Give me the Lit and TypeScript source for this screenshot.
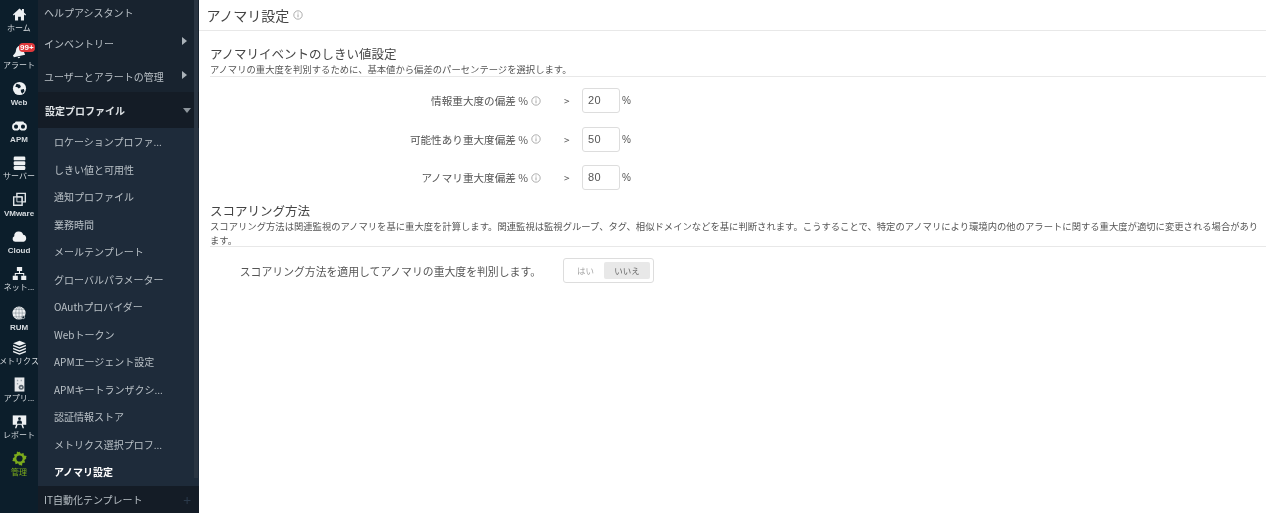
import { LitElement, html, css, svg } from "lit";
import { customElement } from "lit/decorators.js";

const icons: Record<string, unknown> = {
  home: svg`<path d="M8 1.600 1 8l.9 1L3.200 7.900v6.600h3.300v-4.100h3v4.100h3.300V7.900L14.100 9l.9-1-2.300-2.100V2.200h-2.100v1.800z" fill="#eef1f3"/>`,
  bell: svg`<path d="M9 1.500C6 2 4.500 4 4.300 6.500 4.100 9 3 10.800 1 12.300l1 1.700 12-2.500-1-2.500C12.500 7 12.800 2.500 9 1.500zM6 14.200c.4 1.300 2.400 1.300 2.800-.6z" fill="#eef1f3"/>`,
  web: svg`<circle cx="8" cy="8" r="7" fill="#eef1f3"/><path d="M4.800 2.800 8.500 4 9.500 6.300 7.200 8 5.800 6.600l-2.300-.4zM9.300 9.200l3.400-.6.600 2.200-2.300 2.700-1.400-1.700z" fill="#0c1e2b"/>`,
  apm: svg`<path d="M4 3.600h8l3 4.400-4 .5H5L1 8z" fill="#eef1f3"/><circle cx="4.300" cy="9.200" r="3.200" fill="#0c1e2b" stroke="#eef1f3" stroke-width="2"/><circle cx="11.700" cy="9.200" r="3.200" fill="#0c1e2b" stroke="#eef1f3" stroke-width="2"/><rect x="7" y="7" width="2" height="2.500" fill="#eef1f3"/>`,
  server: svg`<rect x="1.800" y="1.500" width="12.400" height="4.200" rx="1.300" fill="#eef1f3"/><rect x="1.800" y="6.600" width="12.400" height="4.200" rx="1.300" fill="#eef1f3"/><rect x="1.800" y="11.700" width="12.400" height="4.200" rx="1.300" fill="#eef1f3"/>`,
  vm: svg`<path d="M5.200 1.500h9v9h-9z" fill="none" stroke="#dfe4e7" stroke-width="1.500"/><path d="M1.800 5.200h9v9h-9z" fill="#0c1e2b" stroke="#dfe4e7" stroke-width="1.500"/><path d="M5.200 5.200h5.600v5.300H5.200z" fill="none" stroke="#dfe4e7" stroke-width="1"/>`,
  cloud: svg`<path d="M3.600 13.600A3.100 3.100 0 0 1 2.400 7.700 4.400 4.400 0 0 1 7 2.700a4.800 4.800 0 0 1 4.900 3.500 3.800 3.800 0 0 1 .5 7.400z" fill="#f1f3f5"/>`,
  net: svg`<path d="M5.200 1h5.600v4.300H5.200zM.8 10.500h5.400v4.500H.8zM9.800 10.500h5.400v4.500H9.800z" fill="#eef1f3"/><path d="M8 5v3.200M3.500 10.500V8h9v2.500" fill="none" stroke="#eef1f3" stroke-width="1.100"/>`,
  rum: svg`<circle cx="7.500" cy="7.500" r="7" fill="#eef1f3"/><path d="M.5 7.500h14M7.500.5v14M2 3.500h11M2 11.500h11" stroke="#67737c" stroke-width=".5"/><ellipse cx="7.500" cy="7.500" rx="3.500" ry="7" fill="none" stroke="#67737c" stroke-width=".5"/><path d="M10.500 10.500h5v4.700h-5z" fill="#0c1e2b"/><circle cx="12" cy="12" r="1.500" fill="none" stroke="#c5ccd1" stroke-width=".9"/>`,
  metrics: svg`<path d="M8 .8 14.800 3.500 8 6.200 1.200 3.500z" fill="#eef1f3"/><path d="M1.200 5.100 8 7.800l6.800-2.700v1.600L8 9.400 1.200 6.700zM1.200 8.300 8 11l6.800-2.700v1.600L8 12.600 1.200 9.900zM1.200 11.500 8 14.200l6.800-2.700v1.600L8 15.800 1.200 13.100z" fill="#eef1f3"/>`,
  app: svg`<path d="M2.800.5h10.400v15H2.800z" fill="#e6e9eb"/><circle cx="9.800" cy="11" r="2.700" fill="#59656e"/><circle cx="9.800" cy="11" r="1" fill="#e6e9eb"/><path d="M5.200 3h1.400v1.400H5.200zM9.200 3h1.400v1.400H9.200zM5.200 6.500h1.400v1.400H5.200z" fill="#9aa3aa"/>`,
  report: svg`<path d="M.8 1.500h14.400v10H.8z" fill="#eef1f3"/><path d="M4.500 11 3.200 15.200h1.500l1.400-4zM11.500 11l1.300 4.200h-1.500l-1.400-4z" fill="#eef1f3"/><circle cx="8" cy="5" r="1.500" fill="#0c1e2b"/><path d="M5.300 10.500c0-3 1-3.800 2.700-3.800s2.700.8 2.700 3.800z" fill="#0c1e2b"/>`,
  gear: svg`<path d="M8 .4 9.500 2.900l2.800-.9.400 2.900 2.900.4-.9 2.800L15.600 8l-2.500 1.500.9 2.800-2.900.4-.4 2.900-2.800-.9L8 15.600 6.500 13.100l-2.800.9-.4-2.900-2.900-.4.9-2.800L.4 8l2.500-1.500L2 3.700l2.900-.4.400-2.900 2.200.9z" fill="#7cab1c"/><circle cx="8" cy="8" r="3.300" fill="#0c1e2b"/>`,
};

const rail: [string, string, boolean?][] = [
  ["home", "ホーム"],
  ["bell", "アラート"],
  ["web", "Web"],
  ["apm", "APM"],
  ["server", "サーバー"],
  ["vm", "VMware"],
  ["cloud", "Cloud"],
  ["net", "ネット..."],
  ["rum", "RUM"],
  ["metrics", "メトリクス"],
  ["app", "アプリ..."],
  ["report", "レポート"],
  ["gear", "管理", true],
];

const sub = [
  "ロケーションプロファ...",
  "しきい値と可用性",
  "通知プロファイル",
  "業務時間",
  "メールテンプレート",
  "グローバルパラメーター",
  "OAuthプロバイダー",
  "Webトークン",
  "APMエージェント設定",
  "APMキートランザクシ...",
  "認証情報ストア",
  "メトリクス選択プロフ...",
];

const info = svg`<svg class="info" viewBox="0 0 10 10"><circle cx="5" cy="5" r="4.200" fill="none" stroke="currentColor" stroke-width=".9"/><path d="M5 4.300v3M5 2.500v1" stroke="currentColor" stroke-width="1"/></svg>`;

@customElement("app-root")
export class AppRoot extends LitElement {
  static styles = css`
    :host {
      display: flex;
      width: 1266px;
      height: 513px;
      overflow: hidden;
      background: #fff;
      font-family: "Noto Sans CJK JP", "Liberation Sans", sans-serif;
      color: #444;
      filter: blur(0.3px);
    }
    .rail {
      width: 38px;
      flex: none;
      background: #0c1e2b;
      display: flex;
      flex-direction: column;
      padding-top: 7px;
      box-sizing: border-box;
      overflow: hidden;
    }
    .ri {
      height: 37px;
      flex: none;
      box-sizing: border-box;
      display: flex;
      flex-direction: column;
      align-items: center;
      color: #d5dade;
      font-size: 8px;
      line-height: 12px;
      white-space: nowrap;
      position: relative;
    }
    .ri svg {
      width: 15px;
      height: 15px;
      flex: none;
    }
    .ri.on {
      color: #7cab1c;
    }
    .ri.latin {
      font-family: "Liberation Sans", sans-serif;
      font-weight: 700;
    }
    .ri.latin span {
      margin-top: 1px;
    }
    .ri.shift {
      padding-top: 3px;
    }
    .badge {
      position: absolute;
      top: -1px;
      left: 19px;
      background: #e0383b;
      color: #fff;
      border-radius: 4px;
      font-size: 8px;
      font-weight: 700;
      line-height: 9px;
      padding: 0 1px;
      font-family: "Liberation Sans", sans-serif;
    }
    .nav {
      width: 161px;
      flex: none;
      background: #18232f;
      color: #b9c0c6;
      font-size: 10px;
      display: flex;
      flex-direction: column;
      position: relative;
      overflow: hidden;
    }
    .top {
      display: flex;
      align-items: center;
      justify-content: space-between;
      padding: 0 7px 0 6px;
      white-space: nowrap;
      flex: none;
    }
    .help {
      height: 25px;
    }
    .inv {
      height: 36px;
    }
    .usr {
      height: 31px;
    }
    .cfg {
      height: 36px;
      background: #141c26;
      color: #dfe3e6;
      font-weight: 700;
      padding-left: 7px;
    }
    .tri-r {
      width: 0;
      height: 0;
      border-left: 5px solid #aab2b9;
      border-top: 4.500px solid transparent;
      border-bottom: 4.500px solid transparent;
      margin-right: 5px;
      margin-top: -4px;
    }
    .tri-d {
      width: 0;
      height: 0;
      margin-right: 1px;
      border-top: 5px solid #8d959c;
      border-left: 4.500px solid transparent;
      border-right: 4.500px solid transparent;
    }
    .list {
      background: #1e2b3a;
      display: flex;
      flex-direction: column;
      flex: none;
    }
    .si {
      height: 27.500px;
      flex: none;
      display: flex;
      align-items: center;
      padding-left: 16px;
      white-space: nowrap;
    }
    .si.cur {
      color: #fff;
      font-weight: 700;
    }
    .it {
      height: 28px;
      background: #141c26;
    }
    .plus {
      color: #2b3a4b;
      font-size: 14px;
      margin-right: 1px;
    }
    .scroll {
      position: absolute;
      right: 1px;
      top: 0;
      width: 4px;
      height: 478px;
      background: #2a3542;
    }
    main {
      flex: 1;
      min-width: 0;
      display: flex;
      flex-direction: column;
    }
    header {
      height: 31px;
      flex: none;
      box-sizing: border-box;
      border-bottom: 1px solid #e8e8e8;
      padding-left: 7.500px;
      display: flex;
      align-items: center;
      gap: 4px;
      font-size: 14px;
      color: #444;
    }
    .info {
      width: 10px;
      height: 10px;
      color: #a5a5a5;
      flex: none;
    }
    .body {
      padding: 13.500px 0 0 11px;
      display: flex;
      flex-direction: column;
    }
    h2 {
      margin: 0;
      font-weight: 400;
      font-size: 12.500px;
      line-height: 17px;
      color: #444;
    }
    .desc {
      font-size: 9.330px;
      line-height: 14px;
      color: #555;
      border-bottom: 1px solid #e8e8e8;
    }
    .rows {
      display: flex;
      flex-direction: column;
      gap: 13.500px;
      padding: 11.500px 0 12px;
    }
    .row {
      display: flex;
      align-items: center;
      height: 25px;
      font-size: 10.600px;
      color: #555;
    }
    .lab {
      width: 331px;
      display: flex;
      justify-content: flex-end;
      align-items: center;
      gap: 3px;
    }
    .gt {
      width: 41px;
      padding-left: 23px;
      box-sizing: border-box;
      font-size: 10px;
    }
    .inp {
      width: 38px;
      height: 25px;
      box-sizing: border-box;
      border: 1px solid #ddd;
      border-radius: 3px;
      padding-left: 5px;
      line-height: 23px;
      font-size: 11px;
      margin-right: 2px;
      font-family: "Liberation Sans", sans-serif;
      letter-spacing: 0.5px;
    }
    .pc {
      font-size: 10px;
      font-family: "Liberation Sans", sans-serif;
    }
    .desc2 {
      width: 1056px;
      padding-right: 4px;
      box-sizing: border-box;
      border: none;
    }
    .rule {
      border-bottom: 1px solid #e8e8e8;
      margin-top: -1px;
    }
    .score {
      display: flex;
      align-items: center;
      height: 25px;
      margin-top: 11px;
      font-size: 10.850px;
      color: #555;
    }
    .score-l {
      width: 331px;
      text-align: right;
      flex: none;
      white-space: nowrap;
    }
    .toggle {
      margin-left: 22px;
      width: 91px;
      height: 25px;
      box-sizing: border-box;
      border: 1px solid #ddd;
      border-radius: 3px;
      display: flex;
      align-items: center;
      padding: 3px;
      font-size: 8.500px;
      color: #a5a5a5;
    }
    .toggle span {
      text-align: center;
      line-height: 17px;
    }
    .no-a {
      width: 37px;
    }
    .yes {
      width: 46px;
      background: #e8e8e8;
      border-radius: 2px;
      color: #666;
    }
  `;

  render() {
    return html`
      <nav class="rail">
        ${rail.map(
          ([ic, label, on], i) => html`<div
            class="ri ${on ? "on" : ""} ${/^[A-Za-z]/.test(label) ? "latin" : ""} ${ic === "rum" ? "shift" : ""}"
          >
            <svg viewBox="0 0 16 16">${icons[ic]}</svg>
            <span>${label}</span>
            ${i === 1 ? html`<b class="badge">99+</b>` : ""}
          </div>`
        )}
      </nav>
      <aside class="nav">
        <div class="top help">ヘルプアシスタント</div>
        <div class="top inv">インベントリー<i class="tri-r"></i></div>
        <div class="top usr">ユーザーとアラートの管理<i class="tri-r"></i></div>
        <div class="top cfg">設定プロファイル<i class="tri-d"></i></div>
        <div class="list">
          ${sub.map((s) => html`<div class="si">${s}</div>`)}
          <div class="si cur">アノマリ設定</div>
        </div>
        <div class="top it">IT自動化テンプレート<span class="plus">+</span></div>
        <div class="scroll"></div>
      </aside>
      <main>
        <header>アノマリ設定 ${info}</header>
        <div class="body">
          <h2>アノマリイベントのしきい値設定</h2>
          <div class="desc">アノマリの重大度を判別するために、基本値から偏差のパーセンテージを選択します。</div>
          <div class="rows">
            ${[
              ["情報重大度の偏差 %", "20"],
              ["可能性あり重大度偏差 %", "50"],
              ["アノマリ重大度偏差 %", "80"],
            ].map(
              ([l, v]) => html`<div class="row">
                <div class="lab">${l} ${info}</div>
                <div class="gt">&gt;</div>
                <div class="inp">${v}</div>
                <div class="pc">%</div>
              </div>`
            )}
          </div>
          <h2>スコアリング方法</h2>
          <div class="desc desc2">スコアリング方法は関連監視のアノマリを基に重大度を計算します。関連監視は監視グループ、タグ、相似ドメインなどを基に判断されます。こうすることで、特定のアノマリにより環境内の他のアラートに関する重大度が適切に変更される場合があります。</div>
          <div class="rule"></div>
          <div class="score">
            <div class="score-l">スコアリング方法を適用してアノマリの重大度を判別します。</div>
            <div class="toggle"><span class="no-a">はい</span><span class="yes">いいえ</span></div>
          </div>
        </div>
      </main>
    `;
  }
}
